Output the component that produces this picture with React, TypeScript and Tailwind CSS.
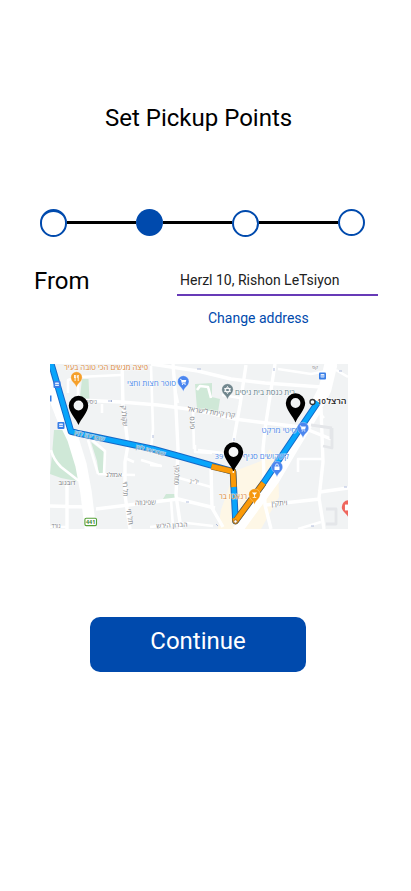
import React from "react";

type Tone = "road" | "business" | "food";

const toneFill: Record<Tone, string> = {
  road: "#7d8186",
  business: "#4a88ea",
  food: "#dc8738",
};

function Label({ x, y, size = 7, rotate = 0, tone = "road", width, fill, weight = 400, children }: {
  x: number; y: number; size?: number; rotate?: number; tone?: Tone; width?: number; fill?: string; weight?: number; children: string;
}) {
  return (
    <text
      x={x} y={y} fontSize={size} fontWeight={weight} textAnchor="middle"
      textLength={width} lengthAdjust="spacingAndGlyphs"
      fill={fill ?? toneFill[tone]} stroke="#fff" strokeOpacity=".6" strokeWidth="1" paintOrder="stroke"
      transform={`rotate(${rotate} ${x} ${y})`}
    >
      {children}
    </text>
  );
}

function Poi({ x, y, color, children }: { x: number; y: number; color: string; children?: React.ReactNode }) {
  return (
    <g transform={`translate(${x} ${y})`}>
      <path d="M0 9.500C-1 5-5.700 4-5.700-.5a5.700 5.700 0 0 1 11.400 0C5.700 4 1 5 0 9.500Z" fill={color} stroke="#fff" strokeWidth=".3" />
      {children}
    </g>
  );
}

function Pin({ x, y }: { x: number; y: number }) {
  return (
    <path
      transform={`translate(${x} ${y})`} fillRule="evenodd"
      d="M0 0C-2.4-6-9.7-13-9.7-19.500a9.7 9.7 0 0 1 19.4 0C9.7-13 2.4-6 0 0ZM0-24.4a4.9 4.9 0 1 0 0 9.8 4.9 4.9 0 0 0 0-9.8Z"
    />
  );
}

function Bus({ x, y }: { x: number; y: number }) {
  return (
    <g transform={`translate(${x} ${y})`}>
      <rect x="-3.5" y="-3.5" width="7" height="7" rx="1" fill="#397ee6" />
      <rect x="-1.9" y="-2" width="3.8" height="3.5" rx=".5" fill="#e6f0ff" />
      <path d="M-1.9 0h3.8" stroke="#397ee6" strokeWidth=".7" />
    </g>
  );
}

function Cart({ x, y }: { x: number; y: number }) {
  return (
    <Poi x={x} y={y} color="#4b86ef">
      <path d="M-3.2-2.6h1.1L-1 1.4h3.2" fill="none" stroke="#fff" strokeWidth=".8" />
      <path d="M-1.8-2h4.8L2.2.6h-3.4Z" fill="#fff" />
      <circle cx="-.8" cy="2.5" r=".6" fill="#fff" /><circle cx="1.8" cy="2.5" r=".6" fill="#fff" />
    </Poi>
  );
}

function RouteMap() {
  const route = "M50 360L52.500 368 71 431.500 77 433 153 449 182 457 233 471.500 235.500 521 262 485 318 402";
  const traffic = "M211.500 466.500L233 471.500 233.800 487M263.500 483L235.500 521 235 518";
  return (
    <svg className="block h-[165px] w-[298px]" viewBox="50 364 298 165" fontFamily="'Open Sans', 'DejaVu Sans', sans-serif">
      <rect x="50" y="364" width="298" height="165" fill="#f1f3f4" />
      <g fill="#cfe8d7">
        <path d="M54 430h14l7 22 6 30-20-4-11-4 2-19ZM50 395l4 2-4 7Z" />
        <path d="M82 379h6.500l1 21-9.500-3ZM91 442l13 10 1 22-6 1-2-14Z" />
        <path d="M195 384l17-1v14l8 2-2 13-21-3ZM163 499l3-5h11v5Z" />
      </g>
      <path d="M240 469l21-8 9-12 8 14 1 34-18 32h-43l3-19 13-37Z" fill="#fef7e6" />
      <g fill="none" stroke="#fff" strokeLinejoin="round">
        <path d="M45 372l7 23 13 33" strokeWidth="9" />
        <path d="M60 412l13 27 8 26 5 27 5 42" strokeWidth="11.500" />
        <path d="M333 360l-8 29-10 23-20 33-20 34-38 52" strokeWidth="10" />
        <path d="M331 364l-6 25-7 14" strokeWidth="13" />
        <g strokeWidth="3.400">
          <path d="M78 400l43 2 37 3 30 4 22 4 25 6 23 3 43 5 30 12" />
          <path d="M122 364l1 41 5 40-3 17v33l5 34" />
          <path d="M151 364l47 7 33 8 34 4 56 4" />
          <path d="M173 364l2 25 3 60-2 46 5 34" />
          <path d="M246 365l-6 40-9 50M275 364l-10 65-2 20 2 56 6 24" />
          <path d="M321 408l2 54-4 36 5 31" />
          <path d="M96 509l82-10 37 9M50 506l37 1M67 485v44" />
          <path d="M266 505l54-6M320 492l28-4" />
          <path d="M211 468l1 40 11 19" />
        </g>
        <g strokeWidth="2.600">
          <path d="M151 366l2 63-2 20M68 393v-13l10-3 43-2M78 377v23M102 404v9" />
          <path d="M175 389l3 14M198 450l33 4M195 445v7l17 1M179 478l32 9M150 465l12 1" />
          <path d="M125 458l9 4M141 460l20 6M98 474l37 1M88 440l10 34M92 440l13 11-1 23" />
          <path d="M51 450c2 8 5 12 10 17l18 14" />
          <path d="M197 390l3-4 8 1 3 11M193 411l1 38M222 395l18 3" />
          <path d="M171 500l2 27M150 527l37-4 26 3M50 527h17" />
          <path d="M298 472v-13h24M278 369l33 5 16-3M336 370l12 7M318 411l6 7M298 529l23-7" />
        </g>
      </g>
      <path d="M311 425l21 3M323 446l9 2v-20M331 428v11M326 509h10v15h-10" fill="none" stroke="#e4e6e9" strokeWidth="2.800" strokeLinejoin="round" />
      <g fill="none" stroke="#8fa0cf" strokeWidth=".7">
        <path d="M108 401h4m-1-1 1 1-1 1M197 369h4M153 435v3M186 502h3M216 524l2 2M234 438v3M339 371h3M274 368v3M311 526h3M347 487h-3" />
      </g>

      <Label x={106} y={369.5} size={7.500} tone="food" width={84}>פיצה מגשים הכי טובה בעיר</Label>
      <Label x={151.500} y={385.500} size={7.500} tone="business" width={49}>סופר חצות וחצי</Label>
      <Label x={265} y={394.500} size={7.500} fill="#66838c" width={60}>בית כנסת בית ניסים</Label>
      <Label x={211} y={414.500} rotate={8} width={48}>קרן קימת לישראל</Label>
      <Label x={91} y={404} width={12}>ניסים</Label>
      <Label x={122} y={416} rotate={86} width={21}>שקולניק</Label>
      <Label x={190} y={423} rotate={88} width={13}>פינס</Label>
      <Label x={114} y={477} width={16}>אמזלג</Label>
      <Label x={67} y={485} width={17}>דובנוב</Label>
      <Label x={145.500} y={505} rotate={-2} width={21}>שפינוזה</Label>
      <Label x={123} y={489} rotate={88} width={15}>תל חי</Label>
      <Label x={127.500} y={517} rotate={82} width={16}>תל חי</Label>
      <Label x={174.500} y={475} rotate={92} width={20}>סמולנסקי</Label>
      <Label x={194} y={484} rotate={5} width={9}>יל״ג</Label>
      <Label x={172} y={527.500} rotate={-3} width={31} size={6.500}>הברון הירש</Label>
      <Label x={279.500} y={505.500} rotate={-3} width={16}>ויתקין</Label>
      <Label x={56} y={528} width={9} size={6}>נורד</Label>
      <Label x={315} y={369} size={5}>קפ</Label>

      <g fill="none" strokeLinejoin="round">
        <path d={route} stroke="#1767c5" strokeWidth="6.600" />
        <path d={route} stroke="#08a5fb" strokeWidth="4.700" />
        <path d={traffic} stroke="#8f6420" strokeWidth="6.400" />
        <path d={traffic} stroke="#fb9a08" strokeWidth="4.900" />
      </g>
      <Label x={89} y={438} rotate={13} width={31} size={6} fill="#78909d">שמריהו לוין</Label>
      <Label x={150} y={452.500} rotate={14} width={30} size={6} fill="#78909d">שמריהו לוין</Label>
      <circle cx="235.500" cy="521.500" r="1.700" fill="#fff" stroke="#8f6222" strokeWidth=".8" />

      <Label x={279} y={432.500} size={7.500} tone="business" width={35}>סיטי מרקט</Label>
      <Label x={266} y={458.500} size={7.500} tone="business" width={46}>קשקושים סניף</Label>
      <Label x={219} y={458.500} size={7.500} tone="business" width={8.500}>39</Label>
      <Label x={233} y={499} size={7.500} tone="food" width={28}>רנאטו בר</Label>

      <Poi x={76.500} y={378} color="#f5a02b">
        <path d="M-2-3v3M-.8-3v3M-1.400-1v4M1.700-3v6M1.700-3c-1 1-1 3 0 3" fill="none" stroke="#fff" strokeWidth=".9" />
      </Poi>
      <Cart x={183.300} y={382} />
      <Cart x={303} y={428.500} />
      <Poi x={227.500} y={390} color="#71878e">
        <path d="M0-3.500 3 1.500h-6ZM0 3.500-3-1.500h6Z" fill="none" stroke="#fff" strokeWidth=".9" />
      </Poi>
      <Poi x={277} y={467.500} color="#4b86ef">
        <path d="M-2.500-1h5v3.500h-5Z" fill="#fff" /><path d="M-1.300-1v-1.300a1.300 1.300 0 0 1 2.600 0V-1" fill="none" stroke="#fff" strokeWidth=".8" />
      </Poi>
      <Poi x={254.500} y={495} color="#f5980f">
        <path d="M-2.600-2.500h5.200L.4 0v2h1.400v.8h-3.600V2h1.400V0Z" fill="#fff" />
      </Poi>
      <g transform="translate(348.500 507.500) scale(1.180)">
        <path d="M0 9C-1 5-5.700 4-5.700-.5a5.700 5.700 0 0 1 11.400 0C5.700 4 1 5 0 9Z" fill="#ef665d" />
        <path d="M-3-2.500h3v5h-3Z" fill="#fff" />
      </g>
      <Bus x={57} y={384.500} /><Bus x={61} y={425.500} /><Bus x={322.500} y={376} />
      <path d="M50 395.500h1.500v6H50Z" fill="#397ee6" />
      <g>
        <rect x="84.900" y="518.200" width="11.600" height="7.400" rx="1.300" fill="#fff" stroke="#55a138" strokeWidth="1.100" />
        <text x="90.700" y="524" fontSize="5.500" fontWeight="700" fill="#438832" textAnchor="middle">441</text>
      </g>
      <Pin x={78.500} y={425} />
      <Pin x={295.500} y={422.500} />
      <circle cx="233.500" cy="452" r="5.500" fill="#f5f6f7" />
      <Pin x={233.500} y={471.500} />
      <circle cx="233.300" cy="472" r=".9" fill="#fff" />
      <circle cx="312.500" cy="402" r="2.500" fill="#fff" stroke="#333" strokeWidth="1.300" />
      <Label x={321.500} y={404} size={7.500} weight={600} fill="#222" width={8.500}>10</Label>
      <Label x={336.500} y={404} size={7.500} weight={600} fill="#222" width={20}>הרצל</Label>
    </svg>
  );
}

function Stepper() {
  return (
    <div className="ml-10 mt-[75px] flex h-7 w-[325px] items-start">
      <div className="h-7 w-[27px] shrink-0 rounded-full border-2 border-t-[3px] border-[#004aad]" />
      <div className="mt-3 h-[3px] flex-1 bg-black" />
      <div className="size-[27px] shrink-0 rounded-full bg-[#004aad]" />
      <div className="mt-3 h-[3px] flex-1 bg-black" />
      <div className="mt-px size-[27px] shrink-0 rounded-full border-2 border-[#004aad]" />
      <div className="mt-3 h-[3px] w-[79px] bg-black" />
      <div className="size-[27px] shrink-0 rounded-full border-2 border-[#004aad]" />
    </div>
  );
}

export default function App() {
  return (
    <main className="flex h-[891px] w-[411px] flex-col overflow-hidden bg-white font-['Roboto',sans-serif] text-black">
      <h1 className="ml-[105px] mt-[103px] whitespace-nowrap text-[24px] leading-[31px]">Set Pickup Points</h1>
      <Stepper />
      <section className="ml-[34px] mt-[29px] flex h-[98px]">
        <h2 className="w-[143px] text-[24px] leading-[30px]">From</h2>
        <div className="flex w-[201px] flex-col">
          <div className="h-[30px] border-b-2 border-[#673ab7] pl-[3px] text-[14px] leading-[29px] text-[#212121]">Herzl 10, Rishon LeTsiyon</div>
          <button className="ml-[31px] mt-3 w-fit whitespace-nowrap text-[14px] leading-5 text-[#004aad]">Change address</button>
        </div>
      </section>
      <div className="ml-[50px]"><RouteMap /></div>
      <button className="ml-[90px] mt-[88px] flex h-[55px] w-[216px] justify-center rounded-[10px] bg-[#004aad] pt-[9px] text-[24px] leading-[30px] text-white">Continue</button>
    </main>
  );
}
